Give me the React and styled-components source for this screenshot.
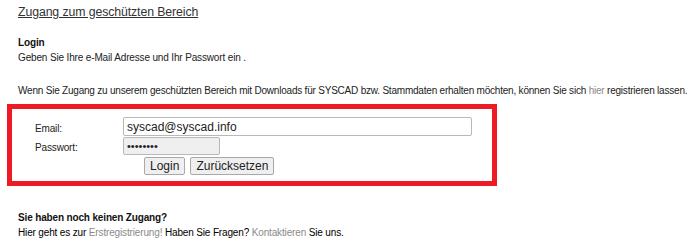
import React from "react";
import styled, { createGlobalStyle } from "styled-components";

const Global = createGlobalStyle`
  body {
    margin: 0;
    background: #fff;
    font-family: "Liberation Sans", Arial, sans-serif;
    color: #222;
  }
`;

const Page = styled.div`
  width: 699px;
  height: 246px;
  overflow: hidden;
  box-sizing: border-box;
  padding: 3px 0 0 18px;
  font-size: 10px;
  letter-spacing: -0.15px;
`;

const Title = styled.h1`
  margin: 0;
  font-size: 12.3px;
  font-weight: 400;
  letter-spacing: -0.1px;
  line-height: 18px;
  text-decoration: underline;
  color: #333;
`;

const Heading = styled.h2`
  margin: 0;
  font-size: 10px;
  font-weight: 700;
  line-height: 15px;
  color: #111;
  margin-top: ${(p) => p.$top || 0}px;
`;

const Text = styled.p`
  margin: 0;
  line-height: 15px;
  white-space: nowrap;
  color: ${(p) => (p.$dark ? "#000" : "#222")};
  letter-spacing: ${(p) => (p.$tight ? "-0.21px" : "inherit")};
  margin-top: ${(p) => p.$top || 0}px;
`;

const Muted = styled.a`
  color: #8a8a8a;
  text-decoration: none;
`;

const Box = styled.div`
  width: 490px;
  height: 82px;
  box-sizing: border-box;
  margin: 6px 0 0 -11px;
  border: 5px solid #ed1c24;
  padding: 8px 0 0 23px;
`;

const Row = styled.div`
  display: flex;
  align-items: flex-end;
  height: ${(p) => p.$h}px;
`;

const Label = styled.label`
  width: 88px;
  line-height: 15px;
`;

const Input = styled.input`
  box-sizing: border-box;
  width: ${(p) => p.$w}px;
  height: ${(p) => p.$h}px;
  margin: 0;
  padding: 0 3px;
  border: 1px solid #b8b8b8;
  border-radius: 2px;
  background: ${(p) => p.$bg || "#fff"};
  font-family: "Liberation Sans", Arial, sans-serif;
  font-size: ${(p) => p.$fs || 12}px;
  color: #222;
  outline: none;
`;

const Buttons = styled.div`
  display: flex;
  gap: 5px;
  padding-left: 109px;
  margin-top: 2px;
`;

const Button = styled.button`
  box-sizing: border-box;
  height: 18px;
  padding: 0 5px;
  border: 1px solid #a9a9a9;
  border-radius: 2px;
  background: #efefef;
  font-family: "Liberation Sans", Arial, sans-serif;
  font-size: 12px;
  color: #222;
  line-height: 16px;
`;

export default function App() {
  return (
    <>
      <Global />
      <Page>
        <Title>Zugang zum geschützten Bereich</Title>
        <Heading $top={14}>Login</Heading>
        <Text>Geben Sie Ihre e-Mail Adresse und Ihr Passwort ein .</Text>
        <Text $top={18} $tight>
          Wenn Sie Zugang zu unserem geschützten Bereich mit Downloads für SYSCAD bzw.
          Stammdaten erhalten möchten, können Sie sich <Muted>hier</Muted> registrieren
          lassen.
        </Text>
        <Box>
          <Row $h={19}>
            <Label>Email:</Label>
            <Input $w={349} $h={19} defaultValue="syscad@syscad.info" />
          </Row>
          <Row $h={19}>
            <Label>Passwort:</Label>
            <Input $w={97} $h={18} $bg="#efefef" $fs={11} type="password" defaultValue="syscadsy" />
          </Row>
          <Buttons>
            <Button>Login</Button>
            <Button>Zurücksetzen</Button>
          </Buttons>
        </Box>
        <Heading $top={24}>Sie haben noch keinen Zugang?</Heading>
        <Text $dark>
          Hier geht es zur <Muted>Erstregistrierung!</Muted> Haben Sie Fragen?{" "}
          <Muted>Kontaktieren</Muted> Sie uns.
        </Text>
      </Page>
    </>
  );
}
